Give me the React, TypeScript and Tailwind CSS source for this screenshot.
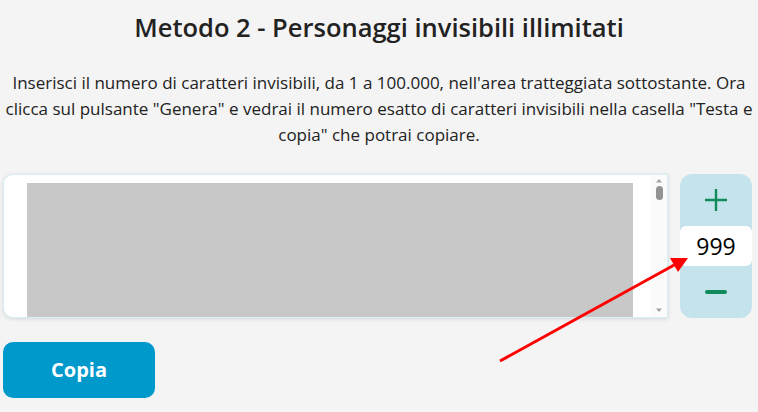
import React from "react";

export default function App() {
  return (
    <div
      className="w-[758px] h-[412px] bg-[#f4f4f4] overflow-hidden relative"
      style={{ fontFamily: '"Segoe UI", "Open Sans", "Noto Sans", sans-serif' }}
    >
      <h1 className="text-center text-[25.5px] leading-[32px] font-semibold text-[#222] pt-[11px] whitespace-nowrap">
        Metodo 2 - Personaggi invisibili illimitati
      </h1>
      <p className="text-center text-[17px] leading-[26px] text-[#222] mt-[27px] whitespace-nowrap">
        Inserisci il numero di caratteri invisibili, da 1 a 100.000, nell'area tratteggiata sottostante. Ora
        <br />
        clicca sul pulsante "Genera" e vedrai il numero esatto di caratteri invisibili nella casella "Testa e
        <br />
        copia" che potrai copiare.
      </p>
      <div className="flex mt-[26px] pl-[3px] pr-[6px] gap-[12px]">
        <div className="flex-1 h-[144px] bg-white rounded-l-[10px] border border-[#d6eef6] shadow-[0_1px_4px_rgba(0,0,0,0.12)] overflow-hidden flex">
          <div className="flex-1 overflow-hidden">
            <div className="ml-[23px] mt-[8px] w-[606px] h-[400px] bg-[#c8c8c8]" />
          </div>
          <div className="w-[16px] h-full bg-[#fbfbfb] flex flex-col items-center">
            <svg width="16" height="14" viewBox="0 0 16 14">
              <path d="M5 7.5h6L8 4z" fill="#a0a0a0" />
            </svg>
            <div className="w-[7px] h-[14px] rounded-full bg-[#929292] mt-[-3px]" />
            <div className="flex-1" />
            <svg width="16" height="14" viewBox="0 0 16 14">
              <path d="M5 5.5h6L8 9z" fill="#a0a0a0" />
            </svg>
          </div>
        </div>
        <div className="w-[72px] h-[144px] bg-[#c5e3ec] rounded-[12px] flex flex-col">
          <div className="h-[52px] flex items-center justify-center">
            <svg width="24" height="24" viewBox="0 0 24 24">
              <path d="M12 1v22M1 12h22" stroke="#118a5c" strokeWidth="2.4" />
            </svg>
          </div>
          <div className="h-[40px] bg-white rounded-[6px] flex items-center justify-center text-[23px] text-black">
            999
          </div>
          <div className="flex-1 flex items-center justify-center">
            <div className="w-[22px] h-[4px] rounded-full bg-[#118a5c]" />
          </div>
        </div>
      </div>
      <button className="absolute left-[3px] top-[342px] w-[152px] h-[56px] rounded-[10px] bg-[#0099cc] text-white text-[20px] font-bold">
        Copia
      </button>
      <svg className="absolute left-0 top-0" width="758" height="412" style={{ pointerEvents: "none" }}>
        <line x1="500" y1="361" x2="676" y2="264" stroke="#ff0000" strokeWidth="3" />
        <polygon points="688,258 670,258 678,272" fill="#ff0000" />
      </svg>
    </div>
  );
}
